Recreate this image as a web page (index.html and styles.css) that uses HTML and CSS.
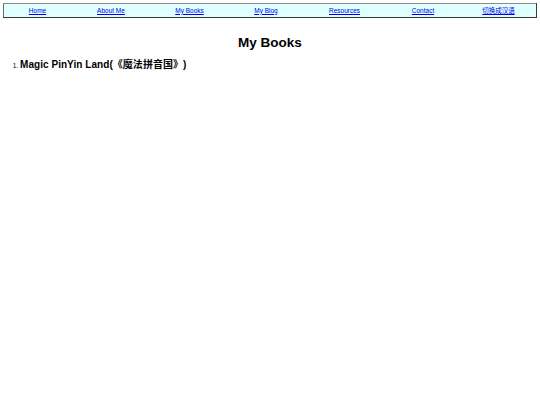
FILE: index.html
```html
<!DOCTYPE html>
<html>
<head>
<meta charset="utf-8">
<link rel="stylesheet" href="styles.css">
</head>
<body>
<table class="nav">
<tr>
<td class="c1"><a href="#">Home</a></td>
<td class="c2"><a href="#">About Me</a></td>
<td class="c3"><a href="#">My Books</a></td>
<td class="c4"><a href="#">My Blog</a></td>
<td class="c5"><a href="#">Resources</a></td>
<td class="c6"><a href="#">Contact</a></td>
<td class="c7"><a href="#" class="cjk">切换成汉语</a></td>
</tr>
</table>
<h2 class="title">My Books</h2>
<ol class="books">
<li><span class="book">Magic PinYin Land(《魔法拼音国》)</span></li>
</ol>
</body>
</html>
```

FILE: styles.css
```css
body {
  margin: 3px;
  font-family: "Liberation Sans", Arial, "Noto Sans CJK SC", sans-serif;
  background: #fff;
  color: #000;
}
.nav {
  width: 100%;
  table-layout: fixed;
  border-collapse: collapse;
  background: #e0ffff;
  border-style: solid;
  border-width: 1px;
  border-color: #8a8a8a #3a3a3a #3a3a3a #6a6a6a;
  height: 15px;
}
.nav td {
  text-align: center;
  padding: 0;
  font-size: 6.5px;
  line-height: 12px;
  white-space: nowrap;
}
.nav .c1 { width: 67px; }
.nav .c2 { width: 80px; }
.nav .c3 { width: 77px; }
.nav .c4 { width: 76px; }
.nav .c5 { width: 81px; }
.nav .c6 { width: 76px; }
.nav .c7 { width: 75px; }
.nav a {
  color: #0000ee;
  text-decoration: underline;
}
.title {
  text-align: center;
  font-size: 13.5px;
  font-weight: bold;
  margin: 17px 0 0 0;
  line-height: 16px;
}
.books {
  margin: 6px 0 0 0;
  padding-left: 17px;
  font-size: 6.5px;
}
.books li {
  line-height: 16px;
}
.book {
  font-size: 10px;
  font-weight: bold;
  letter-spacing: 0.05px;
  text-spacing-trim: space-all;
  font-feature-settings: "fwid" 1;
}
```
